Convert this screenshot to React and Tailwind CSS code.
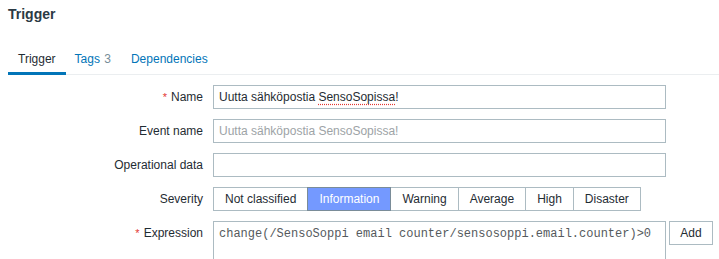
import React from 'react';

const severities = ['Not classified', 'Information', 'Warning', 'Average', 'High', 'Disaster'];

const Label = ({ children, required }) => (
  <div className="w-[203px] shrink-0 text-right leading-[24px] text-[#1f2c33]">
    {required && <span className="text-[#e33734] mr-[4px] text-[11px] align-top">*</span>}
    {children}
  </div>
);

const Field = ({ children, muted }) => (
  <div
    className={`w-[453px] h-[24px] border border-[#acbbc2] bg-white px-[5px] leading-[22px] whitespace-nowrap overflow-hidden ${
      muted ? 'text-[#9da3a6]' : 'text-[#1f2c33]'
    }`}
  >
    {children}
  </div>
);

export default function App() {
  return (
    <div className="w-[719px] h-[259px] overflow-hidden bg-white text-[12px] text-[#1f2c33] font-['Liberation_Sans',Arial,sans-serif]">
      {/* Header */}
      <h1 className="pl-2 h-[28px] leading-[28px] text-[14px] font-bold text-[#2b3a44]">Trigger</h1>

      {/* Tabs */}
      <div className="mt-[16px] ml-2 h-[31px] border-b border-[#ebeef0] flex items-start">
        <div className="h-[31px] px-[10px] pt-[3px] leading-[25px] border-b-[3px] border-[#0275b8] text-[#1f2c33]">Trigger</div>
        <div className="h-[31px] px-[9px] pt-[3px] leading-[25px] border-b-[3px] border-transparent text-[#0275b8]">
          Tags <span className="text-[#768d99] ml-[1px]">3</span>
        </div>
        <div className="h-[31px] px-[11px] pt-[3px] leading-[25px] border-b-[3px] border-transparent text-[#0275b8]">Dependencies</div>
      </div>

      {/* Form */}
      <div className="mt-[10px] flex flex-col gap-[10px]">
        <div className="flex gap-[10px]">
          <Label required>Name</Label>
          <Field>
            Uutta sähköpostia{' '}
            <span className="underline decoration-dotted decoration-[#e33734] underline-offset-[3px]">SensoSopissa</span>!
          </Field>
        </div>

        <div className="flex gap-[10px]">
          <Label>Event name</Label>
          <Field muted>Uutta sähköpostia SensoSopissa!</Field>
        </div>

        <div className="flex gap-[10px]">
          <Label>Operational data</Label>
          <Field />
        </div>

        <div className="flex gap-[10px]">
          <Label>Severity</Label>
          <div className="flex">
            {severities.map((s, i) => (
              <div
                key={s}
                className={
                  s === 'Information'
                    ? `h-[24px] px-[11px] leading-[22px] border border-[#7a8c98] bg-[#7499ff] text-white ${i > 0 ? '-ml-px' : ''} relative`
                    : `h-[24px] px-[11px] leading-[22px] border border-[#acbbc2] bg-white text-[#1f2c33] ${i > 0 ? '-ml-px' : ''}`
                }
              >
                {s}
              </div>
            ))}
          </div>
        </div>

        <div className="flex gap-[10px]">
          <Label required>Expression</Label>
          <div className="flex gap-[3px] items-start">
            <div className="w-[453px] h-[60px] border border-[#acbbc2] bg-white px-[5px] pt-[4px] leading-[16px] whitespace-nowrap overflow-hidden text-[#555a5d] font-['Liberation_Mono','Courier_New',monospace]">
              change(/SensoSoppi email counter/sensosoppi.email.counter)&gt;0
            </div>
            <button className="w-[44px] h-[24px] border border-[#acbbc2] bg-white text-[#1f2c33] leading-[22px] text-center">
              Add
            </button>
          </div>
        </div>
      </div>
    </div>
  );
}
